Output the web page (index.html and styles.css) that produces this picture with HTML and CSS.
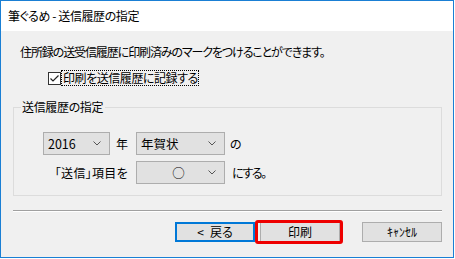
FILE: index.html
```html
<!DOCTYPE html>
<html lang="ja">
<head>
<meta charset="utf-8">
<title>筆ぐるめ - 送信履歴の指定</title>
<link rel="stylesheet" href="styles.css">
</head>
<body>
<div class="window">
  <div class="titlebar">筆ぐるめ - 送信履歴の指定</div>
  <div class="content">
    <p class="intro">住所録の送受信履歴に印刷済みのマークをつけることができます。</p>
    <div class="check-row">
      <span class="checkbox">
        <svg width="13" height="13" viewBox="0 0 13 13"><rect x="0.5" y="0.5" width="12" height="12" fill="#fff" stroke="#333"/><path d="M2.5 6.5 L5 9 L10.5 3.5" fill="none" stroke="#222" stroke-width="1.2"/></svg>
      </span>
      <span class="check-label">印刷を送信履歴に記録する</span>
    </div>
    <fieldset class="group">
      <legend>送信履歴の指定</legend>
      <div class="grid">
        <div class="cell-left">
          <div class="combo combo-year"><span>2016</span><svg class="chev" width="8" height="5" viewBox="0 0 8 5"><path d="M0.5 0.5 L4 4 L7.5 0.5" fill="none" stroke="#555" stroke-width="1"/></svg></div>
          <span class="unit">年</span>
        </div>
        <div class="combo combo-wide"><span>年賀状</span><svg class="chev" width="8" height="5" viewBox="0 0 8 5"><path d="M0.5 0.5 L4 4 L7.5 0.5" fill="none" stroke="#555" stroke-width="1"/></svg></div>
        <span class="after">の</span>
        <div class="cell-left"><span class="row-label">「送信」項目を</span></div>
        <div class="combo combo-wide combo-center"><span>○</span><svg class="chev" width="8" height="5" viewBox="0 0 8 5"><path d="M0.5 0.5 L4 4 L7.5 0.5" fill="none" stroke="#555" stroke-width="1"/></svg></div>
        <span class="after after-tight">にする。</span>
      </div>
    </fieldset>
    <div class="separator"></div>
    <div class="buttons">
      <button class="btn btn-default"><span class="lt">&lt;</span>戻る</button>
      <button class="btn btn-highlight">印刷</button>
      <button class="btn btn-cancel">ｷｬﾝｾﾙ</button>
    </div>
  </div>
</div>
</body>
</html>
```
FILE: styles.css
```css
html, body {
  margin: 0;
  padding: 0;
  background: #ffffff;
}
body {
  font-family: "Noto Sans CJK JP", "Noto Sans", sans-serif;
  font-size: 12px;
  color: #000;
  font-feature-settings: "palt";
}
.window {
  box-sizing: border-box;
  width: 454px;
  height: 258px;
  border: 1px solid #1a7fd4;
  display: flex;
  flex-direction: column;
}
.titlebar {
  height: 30px;
  line-height: 29px;
  padding-left: 7px;
  background: #fff;
  font-size: 12px;
  letter-spacing: -0.4px;
}
.content {
  flex: 1;
  background: #f0f0f0;
  padding: 13px 11px 0 12px;
}
.intro {
  margin: 0 0 0 7px;
  line-height: 16px;
  height: 16px;
  letter-spacing: -1.1px;
  white-space: nowrap;
}
.check-row {
  display: flex;
  align-items: center;
  height: 16px;
  margin-top: 10px;
  margin-left: 35px;
}
.checkbox {
  display: flex;
  width: 13px;
  height: 13px;
}
.check-label {
  padding: 0 0 0 1px;
  border: 1px dotted #000;
  line-height: 14px;
  letter-spacing: -0.45px;
}
.group {
  margin: 13px 0 0 0;
  padding: 17px 0 11px 0;
  border: 1px solid #dcdcdc;
  min-width: 0;
}
.group legend {
  margin-left: 7px;
  padding: 0 2px 0 1px;
  line-height: 16px;
  font-size: 12px;
  letter-spacing: -0.35px;
}
.grid {
  display: grid;
  grid-template-columns: 122px 89px auto;
  row-gap: 6px;
  align-items: center;
}
.cell-left {
  display: flex;
  align-items: center;
  justify-content: flex-end;
  padding-right: 8px;
}
.unit {
  margin-left: 6px;
}
.row-label {
  letter-spacing: 0.3px;
}
.combo {
  box-sizing: border-box;
  height: 23px;
  border: 1px solid #adadad;
  background: #e1e1e1;
  display: flex;
  align-items: center;
  padding: 0 8px 0 4px;
  font-size: 12.5px;
}
.combo span {
  flex: 1;
}
.combo-year {
  width: 67px;
}
.combo-wide {
  width: 89px;
}
.combo-center span {
  text-align: center;
  padding-left: 8px;
}
.chev {
  flex: none;
}
.after {
  margin-left: 5px;
}
.after-tight {
  margin-left: 7px;
  letter-spacing: -1.4px;
}
.separator {
  margin-top: 14px;
  height: 1px;
  border-top: 1px solid #a0a0a0;
  background: #fff;
}
.buttons {
  display: flex;
  justify-content: flex-end;
  margin-top: 10px;
}
.btn {
  box-sizing: border-box;
  width: 80px;
  height: 20px;
  border: 1px solid #adadad;
  background: #e1e1e1;
  font-family: "Noto Sans CJK JP", "Noto Sans", sans-serif;
  font-size: 12px;
  line-height: 16px;
  padding: 0;
  color: #000;
  font-feature-settings: "palt";
}
.lt {
  margin-right: 6px;
}
.btn-default {
  border: 2px solid #0078d7;
  margin-right: 5px;
}
.btn-highlight {
  position: relative;
  margin-right: 22px;
}
.btn-highlight::after {
  content: "";
  position: absolute;
  left: -6px;
  right: -4px;
  top: -3px;
  bottom: -3px;
  border: 3px solid #ee0000;
  border-radius: 3px;
}
```
